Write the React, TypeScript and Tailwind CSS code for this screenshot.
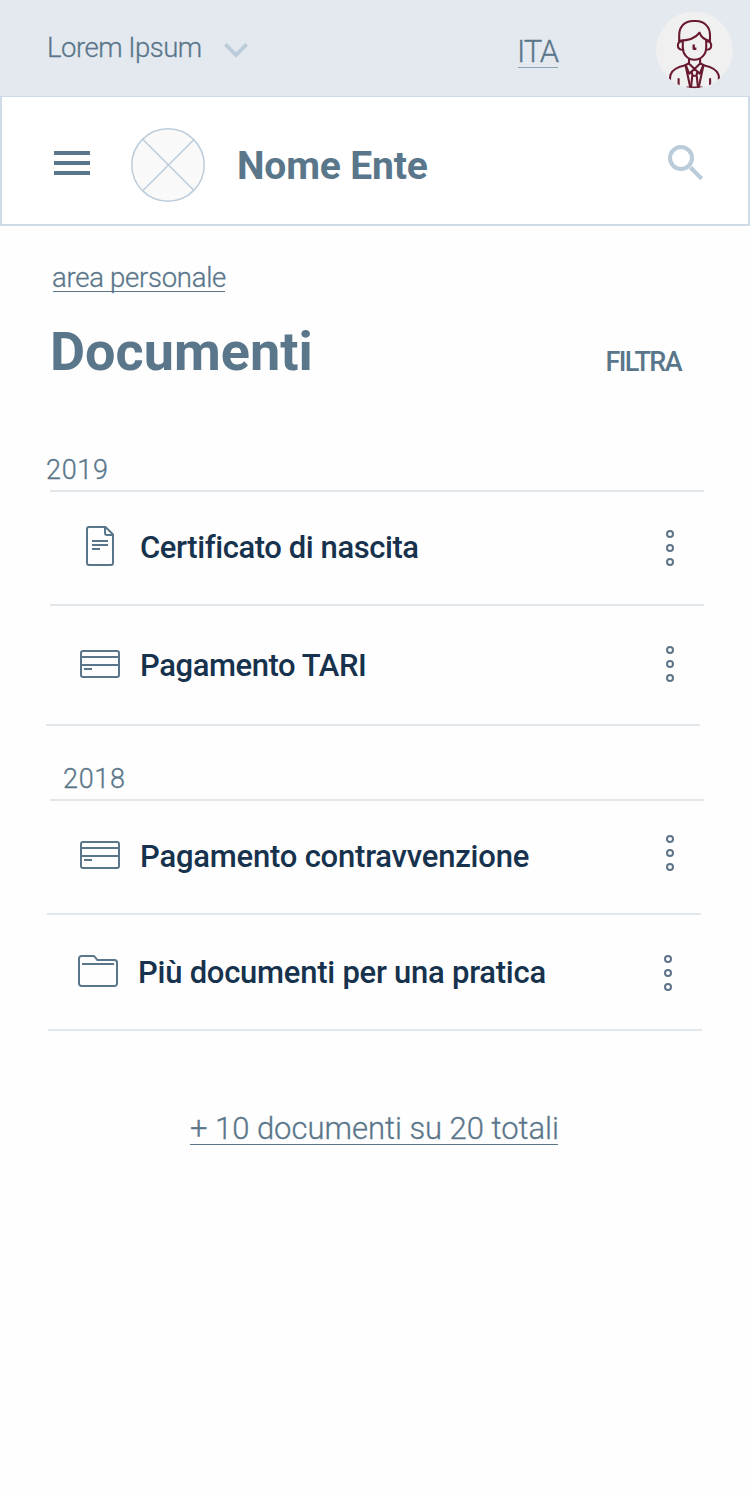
import type { ReactNode } from "react";

function ChevronIcon() {
  return (
    <svg className="mt-[42px] ml-[22px] h-4 w-6 shrink-0" viewBox="0 0 24 16" fill="none">
      <path d="M1.4 2.4 12 13 22.6 2.4" stroke="#bacbd9" strokeWidth="3.8" />
    </svg>
  );
}

function Avatar() {
  return (
    <svg className="mt-3 h-[77px] w-[77px] shrink-0" viewBox="0 0 77 77" fill="none">
      <defs>
        <clipPath id="avatar-disc">
          <circle cx="38.3" cy="38" r="38.2" />
        </clipPath>
      </defs>
      <circle cx="38.3" cy="38" r="38.3" fill="#f0f0f1" />
      <g
        clipPath="url(#avatar-disc)"
        stroke="#691a2f"
        strokeWidth="2.1"
        strokeLinecap="round"
        strokeLinejoin="round"
      >
        <path d="M23.200 28.500V23.200C23.200 14.500 29 9 37 9h3c8 0 14 5.600 14 14.200v5.300" />
        <path d="M23.200 28.700c9 0 16.300-2.300 20.300-8 1.500 4.500 5 7.300 10.500 8.300" />
        <path d="M26.800 28.500v7c0 6.800 4.700 12.200 11.600 12.200s11.800-5.400 11.800-12.200v-7" />
        <path d="M26.500 29.200c-3 0-4.600 1.600-4.600 4.200s2 4.400 5.200 4.400" />
        <path d="M50.500 29.200c3 0 4.700 1.600 4.700 4.200s-2.100 4.400-5.300 4.400" />
        <path d="M37.700 32.400v4.400h2.700" strokeWidth="2.4" strokeLinecap="butt" />
        <path d="M33 47.600v3.900l5.500 5.500 5.600-5.500v-3.900" />
        <path d="M38.500 57l-5.300 4.600-3.600-8.600 3.400-1.700M38.500 57l5.300 4.600 3.600-8.600-3.400-1.700" />
        <path d="M29.400 53.300c-7 1.600-13.400 3.800-14.900 9.500-.6 2.200-.5 2.700-.5 8" />
        <path d="M47.600 53.300c7 1.600 13.400 3.800 14.900 9.500.6 2.200.5 2.700.5 8" />
        <path d="M29.600 53.500l4.700 22M47.400 53.500l-4.700 22" />
        <path d="M35.800 60.500l.7 3.200h4l.7-3.200M36.300 63.700l-1.300 12M40.700 63.700l1.300 12" />
        <path d="M22.600 67v9M54.100 67v9M31 75.600h15" />
      </g>
    </svg>
  );
}

function MenuIcon() {
  return (
    <div className="mt-[54px] ml-[52px] flex h-6 w-9 shrink-0 flex-col justify-between">
      <div className="h-1 bg-[#5a768a]" />
      <div className="h-1 bg-[#5a768a]" />
      <div className="h-1 bg-[#5a768a]" />
    </div>
  );
}

function LogoPlaceholder() {
  return (
    <svg className="mt-[31px] ml-[41px] h-[74px] w-[74px] shrink-0" viewBox="0 0 74 74" fill="none">
      <circle cx="37" cy="37" r="36.200" fill="#f9f9f9" stroke="#bdcddb" strokeWidth="1.500" />
      <path d="M12 11.500 63 62.500M63 11.500 12 62.500" stroke="#bdcddb" strokeWidth="1.500" />
    </svg>
  );
}

function SearchIcon() {
  return (
    <svg className="mt-[48px] mr-[44px] ml-auto h-9 w-9 shrink-0" viewBox="0 0 36 36" fill="none" stroke="#bacbd9">
      <circle cx="13" cy="13" r="11" strokeWidth="4" />
      <path d="M22.500 22.500 33.700 33.700" strokeWidth="4.200" />
    </svg>
  );
}

function FileIcon() {
  return (
    <svg className="h-10 w-7" viewBox="0 0 28 40" fill="none" stroke="#5a768a" strokeWidth="2">
      <path d="M3 1h16.500L27 8.500V37a2 2 0 0 1-2 2H3a2 2 0 0 1-2-2V3a2 2 0 0 1 2-2Z" />
      <path d="M19 1v6a2 2 0 0 0 2 2h6" />
      <path d="M6 15h16M6 19h16M6 23h8" />
    </svg>
  );
}

function CardIcon() {
  return (
    <svg className="h-7 w-10" viewBox="0 0 40 28" fill="none" stroke="#5a768a" strokeWidth="2">
      <rect x="1" y="1" width="38" height="26" rx="2" />
      <path d="M1 7h38M1 15h38M4 19h8" />
    </svg>
  );
}

function FolderIcon() {
  return (
    <svg className="h-8 w-10" viewBox="0 0 40 32" fill="none" stroke="#5a768a" strokeWidth="2">
      <path d="M3.500 1H15c1 0 1.500.3 2 1l2.300 3H36.500A2.500 2.500 0 0 1 39 7.500v21a2.500 2.500 0 0 1-2.500 2.500h-33A2.500 2.500 0 0 1 1 28.500v-25A2.500 2.500 0 0 1 3.500 1Z" />
      <path d="M4 9h32" />
    </svg>
  );
}

function MoreIcon() {
  return (
    <svg className="h-9 w-2" viewBox="0 0 8 36" fill="none" stroke="#5f7389" strokeWidth="2">
      <circle cx="4" cy="4" r="3" />
      <circle cx="4" cy="18" r="3" />
      <circle cx="4" cy="32" r="3" />
    </svg>
  );
}

type RowProps = {
  row: string;
  icon: ReactNode;
  iconBox: string;
  title: string;
  titleBox: string;
  moreBox: string;
};

function DocumentRow({ row, icon, iconBox, title, titleBox, moreBox }: RowProps) {
  return (
    <li className={`flex items-start ${row}`}>
      <div className={`flex w-10 shrink-0 justify-center ${iconBox}`}>{icon}</div>
      <p className={`text-[31px] leading-10 font-medium whitespace-nowrap text-[#17324d] ${titleBox}`}>
        {title}
      </p>
      <button className={`ml-auto shrink-0 ${moreBox}`} aria-label="Azioni">
        <MoreIcon />
      </button>
    </li>
  );
}

function Line({ offset }: { offset: string }) {
  return <div className={`h-0.5 w-[654px] bg-[#e2e7eb] ${offset}`} />;
}

export default function App() {
  return (
    <div className="min-h-[1496px] w-[750px] overflow-hidden bg-[#fefefe] font-['Roboto',sans-serif] text-[#5a768a]">
      <header>
        <div className="flex h-24 items-start bg-[#e4e9f0]">
          <p className="mt-[28px] ml-[47px] w-[155px] shrink-0 text-[27.5px] leading-10 font-light tracking-[-0.5px] whitespace-nowrap [-webkit-text-stroke:0.3px]">
            Lorem Ipsum
          </p>
          <ChevronIcon />
          <a className="mt-[31px] ml-[270px] h-[37px] w-[40px] shrink-0 border-b-[1.5px] border-[#8fa5b3] text-[31px] leading-[41px] font-light tracking-[-1.2px] whitespace-nowrap [-webkit-text-stroke:0.3px]">
            <span className="-ml-[1px]">ITA</span>
          </a>
          <div className="ml-[98px]">
            <Avatar />
          </div>
        </div>
        <div className="flex h-[130px] items-start border-2 border-t border-[#cfdce7] bg-white">
          <MenuIcon />
          <LogoPlaceholder />
          <p className="mt-[49px] ml-[32px] text-[39px] leading-10 font-bold tracking-[-0.15px] whitespace-nowrap">
            Nome Ente
          </p>
          <SearchIcon />
        </div>
      </header>

      <main>
        <a className="mt-[31px] ml-[53px] block h-[35px] w-[172px] border-b border-[#5a768a] text-[27.5px] leading-[42px] font-light tracking-[-0.27px] whitespace-nowrap [-webkit-text-stroke:0.3px]">
          <span className="-ml-[1px]">area personale</span>
        </a>
        <div className="flex h-[160px] items-start">
          <h1 className="mt-[28px] ml-[50px] text-[54px] leading-[64px] font-bold">Documenti</h1>
          <button className="mt-[50px] mr-[69px] ml-auto text-[27px] leading-10 font-medium tracking-[-1.6px]">
            FILTRA
          </button>
        </div>

        <section>
          <h2 className="-mt-0.5 ml-[46px] h-[40px] text-[27px] leading-10 font-light tracking-[0.7px] [-webkit-text-stroke:0.3px]">
            2019
          </h2>
          <Line offset="ml-[50px]" />
          <ul>
            <DocumentRow
              row="h-[112px] pl-20"
              icon={<FileIcon />}
              iconBox="mt-[34px]"
              title="Certificato di nascita"
              titleBox="mt-[36px] ml-5 tracking-[-0.42px]"
              moreBox="mt-[38px] mr-[76px]"
            />
            <Line offset="ml-[50px]" />
            <DocumentRow
              row="h-[118px] pl-20"
              icon={<CardIcon />}
              iconBox="mt-[44px]"
              title="Pagamento TARI"
              titleBox="mt-[40px] ml-5 tracking-[-0.42px]"
              moreBox="mt-[40px] mr-[76px]"
            />
            <Line offset="ml-[46px]" />
          </ul>
        </section>

        <section>
          <h2 className="ml-[63px] h-[73px] pt-[33px] text-[27px] leading-10 font-light tracking-[0.7px] [-webkit-text-stroke:0.3px]">
            2018
          </h2>
          <Line offset="ml-[50px]" />
          <ul>
            <DocumentRow
              row="h-[112px] pl-20"
              icon={<CardIcon />}
              iconBox="mt-[40px]"
              title="Pagamento contravvenzione"
              titleBox="mt-[36px] ml-5 tracking-[-0.21px]"
              moreBox="mt-[34px] mr-[76px]"
            />
            <Line offset="ml-[47px]" />
            <DocumentRow
              row="h-[114px] pl-[78px]"
              icon={<FolderIcon />}
              iconBox="mt-[40px]"
              title="Più documenti per una pratica"
              titleBox="mt-[38px] ml-5 tracking-[-0.25px]"
              moreBox="mt-[40px] mr-[78px]"
            />
            <Line offset="ml-[48px]" />
          </ul>
        </section>

        <a className="mt-[78px] ml-[190px] block h-9 w-[368px] border-b border-[#5a768a] text-[31px] leading-10 font-light tracking-[-0.02px] whitespace-nowrap [-webkit-text-stroke:0.3px]">
          + 10 documenti su 20 totali
        </a>
      </main>
    </div>
  );
}
